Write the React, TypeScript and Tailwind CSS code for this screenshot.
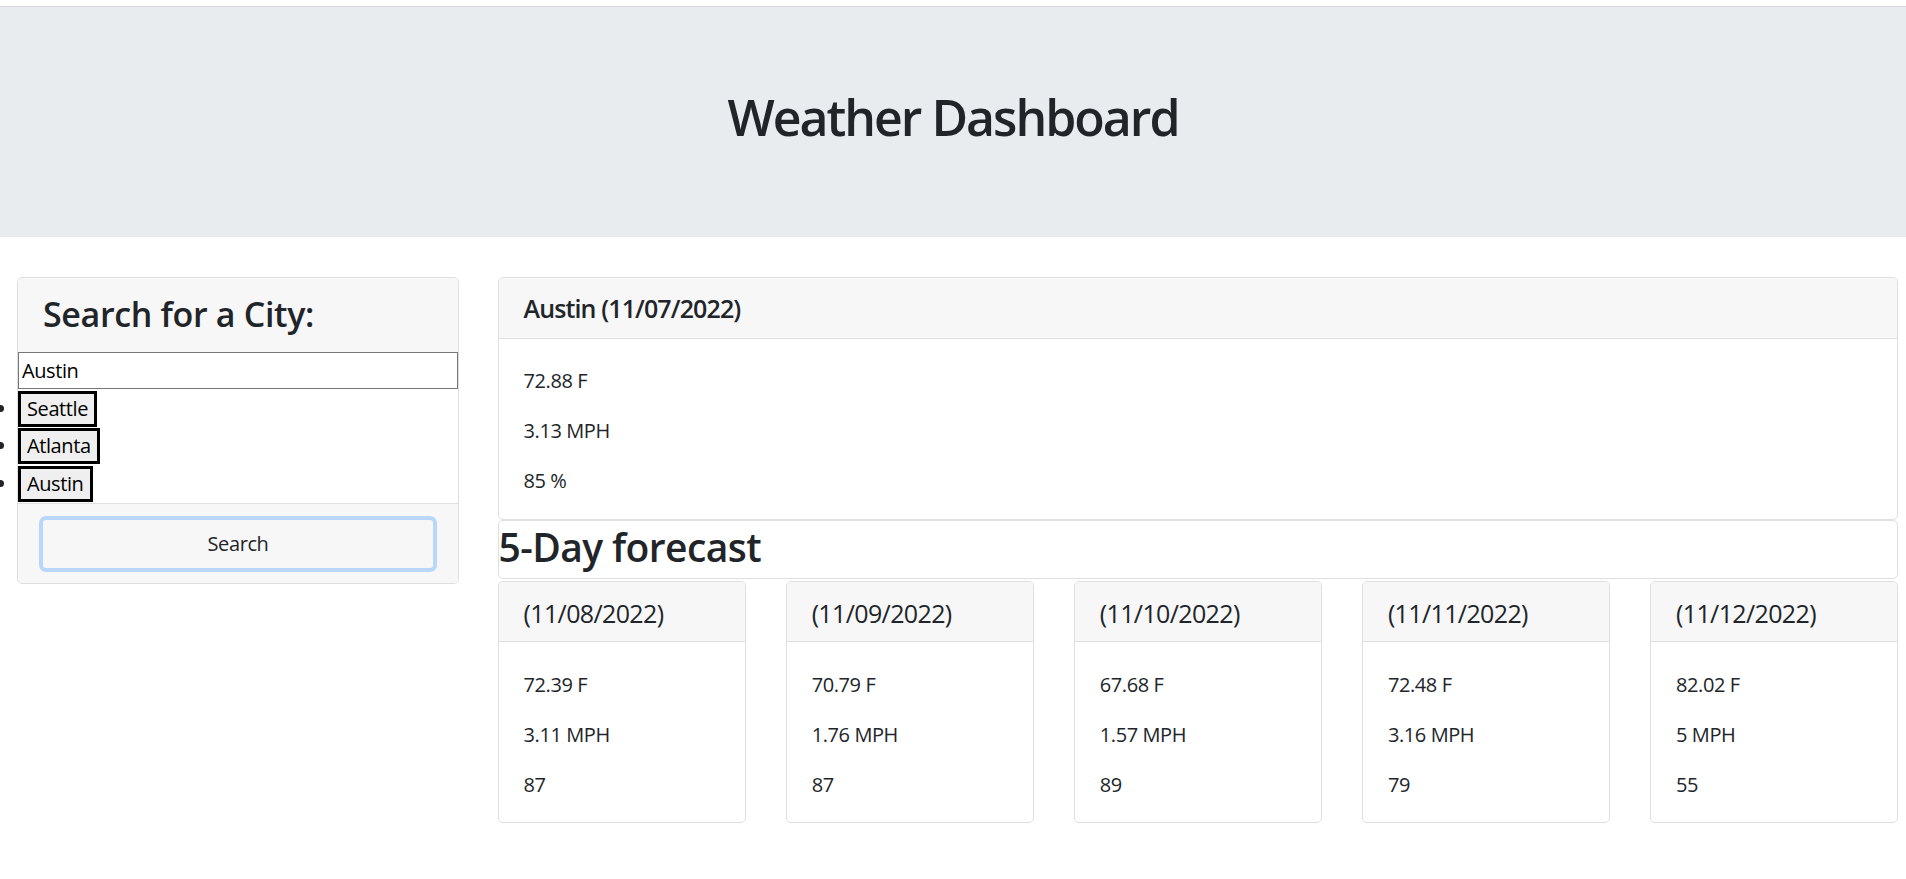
const history = ['Seattle', 'Atlanta', 'Austin'];

const forecast = [
  { date: '(11/08/2022)', temp: '72.39 F', wind: '3.11 MPH', humidity: '87' },
  { date: '(11/09/2022)', temp: '70.79 F', wind: '1.76 MPH', humidity: '87' },
  { date: '(11/10/2022)', temp: '67.68 F', wind: '1.57 MPH', humidity: '89' },
  { date: '(11/11/2022)', temp: '72.48 F', wind: '3.16 MPH', humidity: '79' },
  { date: '(11/12/2022)', temp: '82.02 F', wind: '5 MPH', humidity: '55' },
];

function ForecastCard({ day }: { day: (typeof forecast)[number] }) {
  return (
    <div className="w-[248px] shrink-0 rounded-[5px] border border-[#dfdfdf] bg-white">
      <div className="flex h-[60px] items-center rounded-t-[4px] border-b border-[#dfdfdf] bg-[#f7f7f7] px-[25px] pt-[4px]">
        <h5 className="text-[25px] leading-[30px] font-normal tracking-[-0.025em]">{day.date}</h5>
      </div>
      <div className="flex flex-col gap-[20px] pt-[28px] pb-[22px] px-[25px]">
        <p>{day.temp}</p>
        <p>{day.wind}</p>
        <p>{day.humidity}</p>
      </div>
    </div>
  );
}

export default function App() {
  return (
    <div className="min-h-screen bg-white font-['Open_Sans','Noto_Sans',sans-serif] text-[20px] leading-[30px] tracking-[-0.02em] text-[#212529]">
      <div className="h-[6px]" />
      <header className="border-t border-[#d7d9dc] bg-[#e9ecef] pt-[80px] pb-[90px]">
        <h1 className="text-center text-[50px] leading-[60px] font-semibold tracking-[-0.04em]">Weather Dashboard</h1>
      </header>

      <main className="mt-[40px] flex items-start gap-[38.5px] pl-[17px] pr-[8px]">
        <aside className="w-[442px] shrink-0 rounded-[5px] border border-[#dfdfdf]">
          <div className="h-[73.7px] rounded-t-[4px] bg-[#f7f7f7] px-[25px] pt-[15px]">
            <h3 className="text-[34px] leading-[42px] font-semibold tracking-[-0.01em]">Search for a City:</h3>
          </div>
          <input
            defaultValue="Austin"
            className="block h-[37px] w-full border border-[#767676] bg-white px-[3px] text-[20px] text-black outline-none"
          />
          <ul className="list-disc pb-[1.6px]">
            {history.map((city) => (
              <li key={city} className="h-[37.65px] pt-[2px]">
                <button className="h-[36px] border-[3px] border-black bg-[#efefef] px-[6px] leading-[30px] text-black">
                  {city}
                </button>
              </li>
            ))}
          </ul>
          <div className="rounded-b-[4px] border-t border-[#dfdfdf] bg-[#f7f7f7] px-[21px] py-[11.7px]">
            <button className="h-[55.7px] w-full rounded-[7px] border-4 border-[#b9d8f9] pt-[1px] text-[20px] text-[#212529]">
              Search
            </button>
          </div>
        </aside>

        <section className="min-w-0 flex-1">
          <div className="rounded-[5px] border border-[#dfdfdf]">
            <div className="flex h-[60.5px] items-center rounded-t-[4px] border-b border-[#dfdfdf] bg-[#f7f7f7] px-[25px]">
              <h5 className="text-[25px] leading-[30px] font-semibold tracking-[-0.035em]">Austin (11/07/2022)</h5>
            </div>
            <div className="flex flex-col gap-[20px] pt-[27.5px] pb-[22.5px] px-[25px]">
              <p>72.88 F</p>
              <p>3.13 MPH</p>
              <p>85 %</p>
            </div>
          </div>

          <div className="h-[59.5px] rounded-[5px] border border-[#dfdfdf] pt-[2px]">
            <h2 className="text-[39px] leading-[48px] font-semibold tracking-[-0.015em]">5-Day forecast</h2>
          </div>

          <div className="mt-[1.7px] flex justify-between">
            {forecast.map((day) => (
              <ForecastCard key={day.date} day={day} />
            ))}
          </div>
        </section>
      </main>
    </div>
  );
}
